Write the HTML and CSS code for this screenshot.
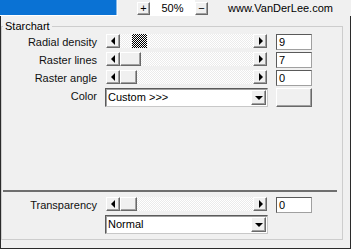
FILE: index.html
```html
<!DOCTYPE html>
<html lang="en">
<head>
  <meta charset="UTF-8">
  <title>Starchart</title>
  <link rel="stylesheet" href="styles.css">
</head>
<body>
  <div class="topbar">
    <svg class="meter" width="118" height="16" viewBox="0 0 118 16"><rect x="0" y="0" width="117" height="15" fill="#0a72d4"/><path d="M117 0V16M0 15.5H118" stroke="#fff"/></svg>
    <div class="btn zoom-btn plus">+</div>
    <div class="zoom-val">50%</div>
    <div class="btn zoom-btn">&minus;</div>
    <span class="site">www.VanDerLee.com</span>
  </div>

  <div class="frame">
    <fieldset class="group">
      <legend>Starchart</legend>

      <div class="upper">
        <div class="row">
          <div class="label">Radial density</div>
          <div class="scroll">
            <div class="btn arrow-btn"><i class="tri-left"></i></div>
            <div class="track"><div class="thumb hatched"></div></div>
            <div class="btn arrow-btn"><i class="tri-right"></i></div>
          </div>
          <div class="edit">9</div>
        </div>
        <div class="row">
          <div class="label">Raster lines</div>
          <div class="scroll">
            <div class="btn arrow-btn"><i class="tri-left"></i></div>
            <div class="track"><div class="btn thumb"></div></div>
            <div class="btn arrow-btn"><i class="tri-right"></i></div>
          </div>
          <div class="edit">7</div>
        </div>
        <div class="row">
          <div class="label">Raster angle</div>
          <div class="scroll">
            <div class="btn arrow-btn"><i class="tri-left"></i></div>
            <div class="track"><div class="btn thumb small"></div></div>
            <div class="btn arrow-btn"><i class="tri-right"></i></div>
          </div>
          <div class="edit">0</div>
        </div>
        <div class="row combo-row">
          <div class="label">Color</div>
          <div class="combo">
            <span class="combo-text">Custom &gt;&gt;&gt;</span>
            <div class="btn drop-btn"><i class="tri-down"></i></div>
          </div>
          <div class="btn color-btn"></div>
        </div>
      </div>

      <div class="sep"></div>

      <div class="lower">
        <div class="row">
          <div class="label">Transparency</div>
          <div class="scroll">
            <div class="btn arrow-btn"><i class="tri-left"></i></div>
            <div class="track"><div class="btn thumb small"></div></div>
            <div class="btn arrow-btn"><i class="tri-right"></i></div>
          </div>
          <div class="edit">0</div>
        </div>
        <div class="row combo-row">
          <div class="label"></div>
          <div class="combo">
            <span class="combo-text">Normal</span>
            <div class="btn drop-btn"><i class="tri-down"></i></div>
          </div>
        </div>
      </div>
    </fieldset>
  </div>
</body>
</html>
```

FILE: styles.css
```css
* { box-sizing: border-box; }
html { background: #f0f0f0; }
body {
  margin: 0;
  width: 351px; height: 249px;
  background: #f0f0f0;
  color: #000;
  font-family: "Liberation Sans", Arial, sans-serif;
  font-size: 11px;
  display: flex; flex-direction: column;
  overflow: hidden;
}

/* raised / sunken win classic look */
.btn {
  background: #f0f0f0;
  border: 1px solid; border-color: #fff #696969 #696969 #fff;
  box-shadow: inset -1px -1px #a0a0a0;
}

.topbar { display: flex; align-items: flex-start; height: 16px; flex: none; background: #f0f0f0; }
.meter { display: block; flex: none; }
.zoom-btn { width: 13px; height: 13px; margin-top: 2px; font-size: 11px; line-height: 10px; text-align: center; }
.zoom-btn.plus { margin-left: 19px; }
.zoom-val { width: 45px; height: 16px; background: #fff; text-align: center; line-height: 16px; }
.site { margin-left: 20px; line-height: 16px; }

.frame { flex: 1; border: 1px solid #2b2b2b; border-top: 0; padding-top: 4px; }
.group { margin: 0 7px 0 0; padding: 0 0 5px; border: 1px solid #cdcdcd; min-width: 0; }
.group legend { margin-left: 1px; padding: 0 2px; line-height: 13px; }

.upper { height: 157px; }
.lower { margin-top: 4px; }
.sep { height: 2px; width: 334px; margin-left: 1px; background: #6f6f6f; }

.row { display: flex; align-items: flex-start; height: 18px; padding-top: 1px; }
.row.combo-row { height: 20px; }
.label { width: 95px; text-align: right; line-height: 16px; white-space: nowrap; color: #111; }

.scroll { display: flex; height: 14px; margin-left: 9px; }
.arrow-btn { width: 14px; height: 14px; display: flex; align-items: center; justify-content: center; }
.track { width: 133px; display: flex; background: repeating-conic-gradient(#fff 0 25%, #ebebeb 0 50%) 0 0 / 2px 2px; }
.thumb { width: 21px; height: 14px; }
.thumb.small { width: 17px; }
.thumb.hatched { width: 15px; margin-left: 12px; background: repeating-conic-gradient(#000 0 25%, #fff 0 50%) 0 0 / 2px 2px; }

.tri-left { width: 0; height: 0; border-top: 4px solid transparent; border-bottom: 4px solid transparent; border-right: 4px solid #000; margin-right: 1px; }
.tri-right { width: 0; height: 0; border-top: 4px solid transparent; border-bottom: 4px solid transparent; border-left: 4px solid #000; margin-left: 1px; }
.tri-down { width: 0; height: 0; border-left: 4px solid transparent; border-right: 4px solid transparent; border-top: 4px solid #000; margin-top: 1px; }

.edit {
  width: 36px; height: 16px; margin-left: 9px;
  background: #fff; padding-left: 2px; line-height: 14px;
  border: 1px solid; border-color: #5a5a5a #a0a0a0 #a0a0a0 #5a5a5a;
}

.combo {
  width: 163px; height: 19px; margin-left: 8px;
  display: flex; justify-content: space-between; align-items: flex-start;
  background: #fff;
  border: 1px solid; border-color: #5a5a5a #c8c8c8 #c8c8c8 #5a5a5a;
  box-shadow: inset 1px 1px #a0a0a0;
}
.combo-text { padding-left: 2px; line-height: 16px; }
.drop-btn { width: 15px; height: 15px; margin: 1px; display: flex; align-items: center; justify-content: center; }
.color-btn { width: 36px; height: 19px; margin-left: 8px; }
```
